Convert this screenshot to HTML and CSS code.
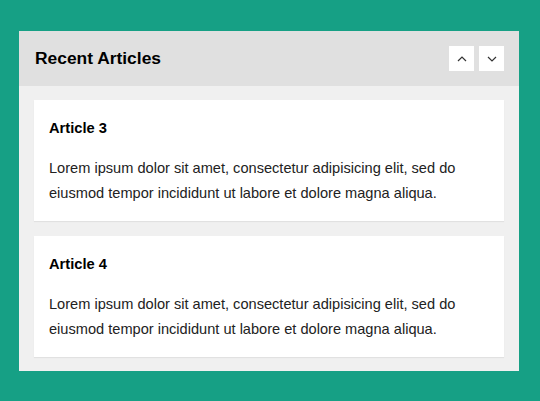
FILE: index.html
```html
<!DOCTYPE html>
<html lang="en">
<head>
<meta charset="utf-8">
<title>Recent Articles</title>
<link rel="stylesheet" href="styles.css">
</head>
<body>
<section class="panel">
  <header class="panel-head">
    <h2 class="panel-title">Recent Articles</h2>
    <div class="nav">
      <button class="nav-btn" type="button" aria-label="Previous">
        <svg width="10" height="6" viewBox="0 0 10 6"><path d="M1 5 L5 1 L9 5" fill="none" stroke="#333" stroke-width="1.2"/></svg>
      </button>
      <button class="nav-btn" type="button" aria-label="Next">
        <svg width="10" height="6" viewBox="0 0 10 6"><path d="M1 1 L5 5 L9 1" fill="none" stroke="#333" stroke-width="1.2"/></svg>
      </button>
    </div>
  </header>
  <div class="panel-body">
    <article class="card">
      <h4 class="card-title">Article 3</h4>
      <p class="card-text">Lorem ipsum dolor sit amet, consectetur adipisicing elit, sed do eiusmod tempor incididunt ut labore et dolore magna aliqua.</p>
    </article>
    <article class="card">
      <h4 class="card-title">Article 4</h4>
      <p class="card-text">Lorem ipsum dolor sit amet, consectetur adipisicing elit, sed do eiusmod tempor incididunt ut labore et dolore magna aliqua.</p>
    </article>
  </div>
</section>
</body>
</html>
```
FILE: styles.css
```css
html, body {
  margin: 0;
  padding: 0;
}

body {
  background: #16a085;
  font-family: "Liberation Sans", Arial, sans-serif;
  padding: 31px 0 0 19px;
}

.panel {
  width: 500px;
  background: #f0f0f0;
}

.panel-head {
  display: flex;
  align-items: center;
  justify-content: space-between;
  height: 55px;
  padding: 0 15px 0 16px;
  box-sizing: border-box;
  background: #e0e0e0;
}

.panel-title {
  margin: 0;
  font-size: 17.4px;
  font-weight: bold;
  color: #000;
}

.nav {
  display: flex;
  gap: 5px;
}

.nav-btn {
  width: 25px;
  height: 25px;
  padding: 0;
  border: 0;
  background: #fff;
  display: flex;
  align-items: center;
  justify-content: center;
}

.panel-body {
  display: flex;
  flex-direction: column;
  gap: 15px;
  padding: 14px 15px 14px;
}

.card {
  background: #fff;
  padding: 20px 15px 15px;
  box-shadow: 0 1px 1px rgba(0, 0, 0, 0.06);
}

.card-title {
  margin: 0 0 20px;
  font-size: 14.7px;
  line-height: 16px;
  font-weight: bold;
  color: #000;
}

.card-text {
  margin: 0;
  font-size: 14.6px;
  line-height: 25px;
  color: #222;
}
```
